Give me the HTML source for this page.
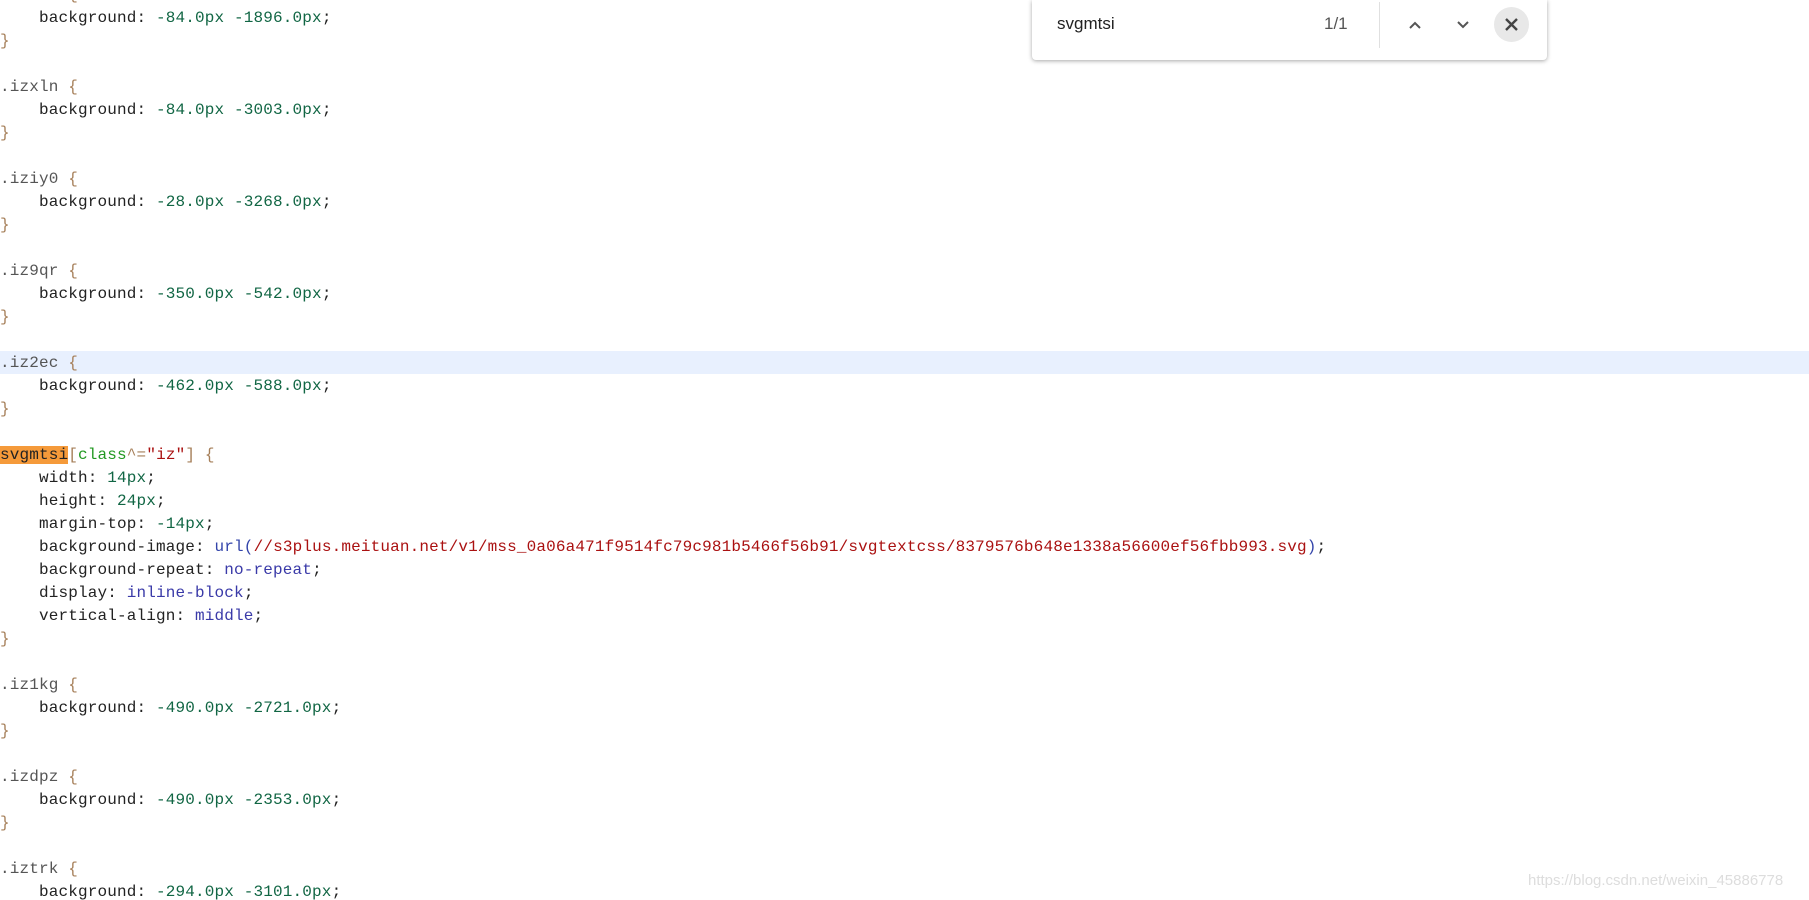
<!DOCTYPE html>
<html><head><meta charset="utf-8"><style>
html,body{margin:0;padding:0;background:#fff;width:1809px;height:900px;overflow:hidden;position:relative}
.l{position:absolute;left:0;height:23px;line-height:23px;font-family:"Liberation Mono","Noto Sans CJK SC",monospace;font-size:16px;letter-spacing:0.15px;white-space:pre;color:#222}
.s{color:#555}.b{color:#a67f59}.n{color:#116644}.u{color:#3344aa}.r{color:#aa1111}.k{color:#3a3aa8}.g{color:#229922}
.hl{position:absolute;left:0;width:1809px;top:351px;height:23px;background:#e8f0fe}
.find{position:absolute;left:1032px;top:0;width:515px;height:60px;background:#fff;box-shadow:0 1px 4px rgba(0,0,0,.35);border-radius:0 0 4px 4px;font-family:"Liberation Sans",sans-serif}
.wm{position:absolute;left:1528px;top:872px;font-family:"Liberation Sans",sans-serif;font-size:15px;color:#ddd}
</style></head><body>
<div class="hl"></div>
<div class="l" style="top:-16px"><span class="s">.iz1x6 </span><span class="b">{</span></div>
<div class="l" style="top:7px">    background: <span class="n">-84.0px -1896.0px</span>;</div>
<div class="l b" style="top:30px">}</div>
<div class="l" style="top:76px"><span class="s">.izxln </span><span class="b">{</span></div>
<div class="l" style="top:99px">    background: <span class="n">-84.0px -3003.0px</span>;</div>
<div class="l b" style="top:122px">}</div>
<div class="l" style="top:168px"><span class="s">.iziy0 </span><span class="b">{</span></div>
<div class="l" style="top:191px">    background: <span class="n">-28.0px -3268.0px</span>;</div>
<div class="l b" style="top:214px">}</div>
<div class="l" style="top:260px"><span class="s">.iz9qr </span><span class="b">{</span></div>
<div class="l" style="top:283px">    background: <span class="n">-350.0px -542.0px</span>;</div>
<div class="l b" style="top:306px">}</div>
<div class="l" style="top:352px"><span class="s">.iz2ec </span><span class="b">{</span></div>
<div class="l" style="top:375px">    background: <span class="n">-462.0px -588.0px</span>;</div>
<div class="l b" style="top:398px">}</div>
<div class="l" style="top:444px"><span style="background:#f59a3a;color:#222">svgmtsi</span><span class="b">[</span><span class="g">class</span><span class="b">^=</span><span class="r">"iz"</span><span class="b">] {</span></div>
<div class="l" style="top:467px">    width: <span class="n">14px</span>;</div>
<div class="l" style="top:490px">    height: <span class="n">24px</span>;</div>
<div class="l" style="top:513px">    margin-top: <span class="n">-14px</span>;</div>
<div class="l" style="top:536px">    background-image: <span class="u">url(</span><span class="r">//s3plus.meituan.net/v1/mss_0a06a471f9514fc79c981b5466f56b91/svgtextcss/8379576b648e1338a56600ef56fbb993.svg</span><span class="u">)</span>;</div>
<div class="l" style="top:559px">    background-repeat: <span class="k">no-repeat</span>;</div>
<div class="l" style="top:582px">    display: <span class="k">inline-block</span>;</div>
<div class="l" style="top:605px">    vertical-align: <span class="k">middle</span>;</div>
<div class="l b" style="top:628px">}</div>
<div class="l" style="top:674px"><span class="s">.iz1kg </span><span class="b">{</span></div>
<div class="l" style="top:697px">    background: <span class="n">-490.0px -2721.0px</span>;</div>
<div class="l b" style="top:720px">}</div>
<div class="l" style="top:766px"><span class="s">.izdpz </span><span class="b">{</span></div>
<div class="l" style="top:789px">    background: <span class="n">-490.0px -2353.0px</span>;</div>
<div class="l b" style="top:812px">}</div>
<div class="l" style="top:858px"><span class="s">.iztrk </span><span class="b">{</span></div>
<div class="l" style="top:881px">    background: <span class="n">-294.0px -3101.0px</span>;</div>
<div class="find">
<div style="position:absolute;left:25px;top:14px;font-size:17px;color:#222">svgmtsi</div>
<div style="position:absolute;left:292px;top:14px;font-size:17px;color:#555">1/1</div>
<div style="position:absolute;left:347px;top:2px;width:1px;height:46px;background:#e0e0e0"></div>
<svg style="position:absolute;left:374px;top:16px" width="18" height="18" viewBox="0 0 18 18"><path d="M4 12 L9 7 L14 12" fill="none" stroke="#555" stroke-width="2"/></svg>
<svg style="position:absolute;left:422px;top:16px" width="18" height="18" viewBox="0 0 18 18"><path d="M4 6 L9 11 L14 6" fill="none" stroke="#555" stroke-width="2"/></svg>
<div style="position:absolute;left:462px;top:7px;width:35px;height:35px;border-radius:50%;background:#e8e8e8"></div>
<svg style="position:absolute;left:470px;top:15px" width="19" height="19" viewBox="0 0 19 19"><path d="M4 4 L15 15 M15 4 L4 15" stroke="#444" stroke-width="2.4"/></svg>
</div>
<div class="wm">https://blog.csdn.net/weixin_45886778</div>
</body></html>
